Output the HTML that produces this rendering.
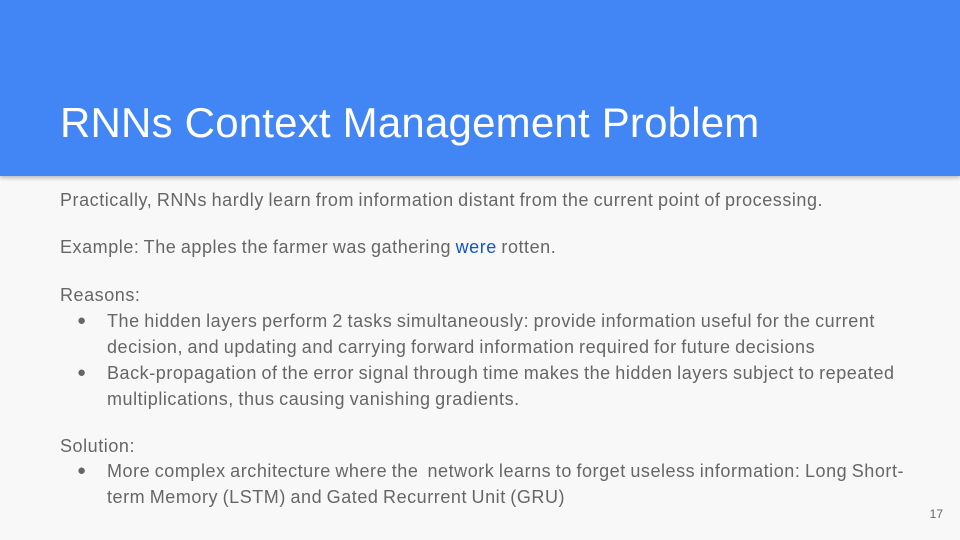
<!DOCTYPE html>
<html><head><style>
body{margin:0;width:960px;height:540px;background:#f8f8f8;position:relative;overflow:hidden;font-family:"Liberation Sans",sans-serif}
.hd{position:absolute;left:0;top:0;width:960px;height:176px;background:#4285f4;box-shadow:0 2px 4px rgba(0,0,0,.25)}
.t{position:absolute;left:60px;top:99px;color:#fff;font-size:42px;letter-spacing:0.2px;white-space:nowrap}
.b{position:absolute;left:60px;color:#666;font-size:18px;letter-spacing:0.55px;word-spacing:-1px;white-space:nowrap;line-height:26px}
.bl{position:absolute;left:77px;color:#666;font-size:15px}
.n{position:absolute;right:17px;top:507px;font-size:12px;color:#666}
</style></head><body>
<div class="hd"></div>
<div class="t">RNNs Context Management Problem</div>
<div class="b" style="top:187px">Practically, RNNs hardly learn from information distant from the current point of processing.</div>
<div class="b" style="top:234px">Example: The apples the farmer was gathering <span style="color:#1155cc">were</span> rotten.</div>
<div class="b" style="top:282px">Reasons:</div>
<div class="bl" style="top:312px">●</div>
<div class="b" style="top:308px;left:107px">The hidden layers perform 2 tasks simultaneously: provide information useful for the current<br>decision, and updating and carrying forward information required for future decisions</div>
<div class="bl" style="top:364px">●</div>
<div class="b" style="top:360px;left:107px">Back-propagation of the error signal through time makes the hidden layers subject to repeated<br>multiplications, thus causing vanishing gradients.</div>
<div class="b" style="top:433px">Solution:</div>
<div class="bl" style="top:462px">●</div>
<div class="b" style="top:458px;left:107px">More complex architecture where the&nbsp; network learns to forget useless information: Long Short-<br>term Memory (LSTM) and Gated Recurrent Unit (GRU)</div>
<div class="n">17</div>
</body></html>
